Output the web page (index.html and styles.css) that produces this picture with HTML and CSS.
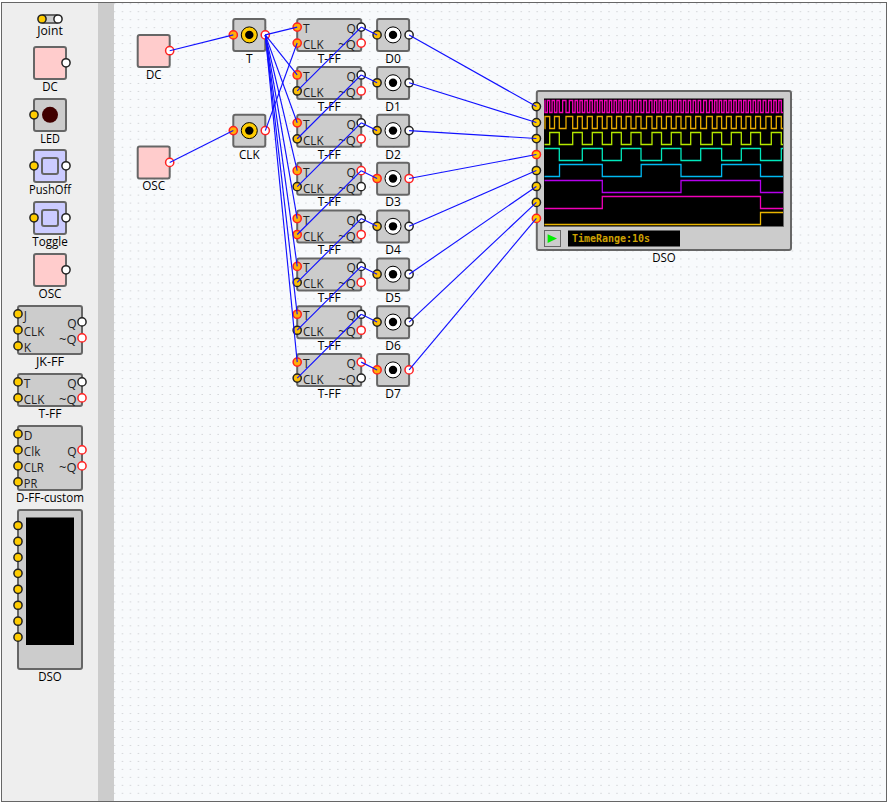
FILE: index.html
```html
<!DOCTYPE html>
<html lang="en">
<head>
<meta charset="utf-8">
<title>Circuit simulator</title>
<link rel="stylesheet" href="styles.css">
</head>
<body>
<main class="app">
  <aside class="palette" id="palette"></aside>
  <div class="divider"></div>
  <section class="stage">
    <svg class="board" id="board" viewBox="114 3 772 798" width="772" height="798"></svg>
  </section>
</main>
<script src="app.js"></script>
</body>
</html>
```
FILE: styles.css
```css
body {
  margin: 0;
  background: #fff;
  font-family: "Open Sans", "Noto Sans", sans-serif;
}

.app {
  display: flex;
  box-sizing: border-box;
  width: 886px;
  height: 800px;
  margin: 2px 0 0 1px;
  border: 1px solid #666;
  overflow: hidden;
}

.palette {
  display: flex;
  flex-direction: column;
  gap: 3.9px;
  box-sizing: border-box;
  width: 96px;
  padding-top: 11.8px;
  background: #eee;
}

.palette svg {
  display: block;
  flex: none;
  overflow: visible;
}

.divider {
  width: 16px;
  background: #ccc;
}

.stage {
  flex: 1;
  background: #f8fafc;
}

.board {
  display: block;
}

text {
  font-size: 12px;
  fill: #000;
}

.pin-name {
  fill: #222;
}

.body {
  fill: #ccc;
  stroke: #666;
  stroke-width: 2;
}

.body.source {
  fill: #fcc;
}

.body.button {
  fill: #ccf;
}

.pin {
  stroke: #222;
  stroke-width: 1.5;
}

.pin.in {
  fill: #fc0;
}

.pin.out {
  fill: #fff;
}

.pin.high {
  stroke: #f22;
}

.board .pin.in {
  fill: #fabe08;
}

.board .pin.in.high {
  fill: #ffae08;
}

.board .pin.in.probe {
  fill: #fc0;
}

.lamp {
  fill: #400000;
}

.jack {
  fill: #fc0;
  stroke: #000;
}

.jack.white {
  fill: #fff;
}

.hole {
  fill: #000;
}

.screen {
  fill: #000;
}

.bezel {
  fill: none;
  stroke: #666;
}

.play {
  fill: #0e0;
}

.lcd {
  font: bold 10px "DejaVu Sans Mono", monospace;
  fill: #cda000;
}

.trace {
  fill: none;
  stroke-width: 1.3;
}

.wire {
  stroke: #11f;
  stroke-width: 1.15;
}

.dot {
  fill: #d6d8db;
}
```
FILE: app.js
```js
const esc = (s) => String(s).replace(/&/g, "&amp;");
const rect = (x, y, w, h, cls, rx = 2) =>
  `<rect class="${cls}" x="${x}" y="${y}" width="${w}" height="${h}" rx="${rx}"/>`;
const pin = (x, y, kind, high) =>
  `<circle class="pin ${kind}${high ? " high" : ""}" cx="${x}" cy="${y}" r="4.1"/>`;

// Advance widths used to keep labels compact.
const WIDTHS = {
  Joint: 25.5, DC: 15.5, LED: 19.5, PushOff: 42, Toggle: 35.5, OSC: 23,
  "JK-FF": 28, "T-FF": 23, "D-FF-custom": 68, DSO: 23.5, CLK: 20.5,
  Clk: 16.5, CLR: 20, PR: 13.5, "~Q": 17.5
};
const text = (s, x, y, anchor, cls = "") => {
  const name = esc(s);
  const len = WIDTHS[s] ? ` textLength="${WIDTHS[s]}" lengthAdjust="spacingAndGlyphs"` : "";
  return `<text class="${cls}" x="${x}" y="${y}" text-anchor="${anchor}"${len}>${name}</text>`;
};

// A flip-flop body with named pins; each pin is [name, offset, high].
function chip(x, y, h, label, inputs, outputs) {
  let s = rect(x, y, 64, h, "body");
  for (const [n, dy] of inputs) s += text(n, x + 5.8, y + dy + 6, "start", "pin-name");
  for (const [n, dy] of outputs) s += text(n, x + 58.6, y + dy + 6, "end", "pin-name");
  for (const [, dy, hi] of inputs) s += pin(x, y + dy, "in", hi);
  for (const [, dy, hi] of outputs) s += pin(x + 64, y + dy, "out", hi);
  return s + text(label, x + 32, y + h + 11.7, "middle");
}

function box(x, y, label, kind, inner, hasIn, high) {
  let s = rect(x, y, 32, 32, "body " + kind) + inner;
  if (hasIn) s += pin(x, y + 15.8, "in", high);
  if (label !== "LED") s += pin(x + 32, y + 15.8, "out", high);
  return s + text(label, x + 16, y + 43.7, "middle");
}

const jack = (x, y, cls) =>
  `<circle class="jack ${cls}" cx="${x}" cy="${y}" r="8"/><circle class="hole" cx="${x}" cy="${y}" r="4.2"/>`;

const items = [];
const add = (h, body) => items.push(`<svg width="96" height="${h}">${body}</svg>`);
add(28, rect(40, 0, 16, 8, "body") + pin(40, 4, "in") + pin(56, 4, "out") + text("Joint", 48, 19.9, "middle"));
add(48, box(32, 0, "DC", "source", "", false));
add(48, box(32, 0, "LED", "", '<circle class="lamp" cx="48" cy="15.8" r="8"/>', true));
add(48, box(32, 0, "PushOff", "button", rect(40, 8, 16, 16, "body button"), true));
add(48, box(32, 0, "Toggle", "button", rect(40, 8, 16, 16, "body button"), true));
add(48, box(32, 0, "OSC", "source", "", false));
add(64, chip(16, 0, 48, "JK-FF", [["J", 7.9], ["CLK", 23.9], ["K", 39.9]], [["Q", 15.9], ["~Q", 31.9, 1]]));
add(48, chip(16, 0, 32, "T-FF", [["T", 7.9], ["CLK", 23.9]], [["Q", 7.9], ["~Q", 23.9, 1]]));
add(80, chip(16, 0, 64, "D-FF-custom",
  [["D", 7.9], ["Clk", 23.9], ["CLR", 39.9], ["PR", 55.9]], [["Q", 23.9, 1], ["~Q", 39.9, 1]]));
let scope = rect(16, 0, 64, 159, "body") + rect(24, 7.5, 48, 127.5, "screen", 0);
for (let i = 0; i < 8; i++) scope += pin(16, 15.5 + i * 15.95, "in");
add(176, scope + text("DSO", 48, 170.7, "middle"));
document.getElementById("palette").innerHTML = items.join("");

// Stage
const STEP = 7.976;
let out = "";
for (let r = 0; r < 100; r++) {
  for (let c = 0; c < 97; c++) {
    out += `<rect class="dot" x="${(113.7 + c * STEP).toFixed(2)}" y="${(3.2 + r * STEP).toFixed(2)}" width="1.6" height="1"/>`;
  }
}
const wires = [];
const wire = (x1, y1, x2, y2) => wires.push(`<line class="wire" x1="${x1}" y1="${y1}" x2="${x2}" y2="${y2}"/>`);

out += box(137.7, 34.9, "DC", "source", "", false, true);
out += box(137.7, 146.6, "OSC", "source", "", false, true);
out += box(233.3, 19.1, "T", "", jack(249.3, 34.9, ""), true, true);
out += box(233.3, 114.8, "CLK", "", jack(249.3, 130.6, ""), true, true);
wire(169.7, 50.7, 233.3, 34.9);
wire(169.7, 162.4, 233.3, 130.6);
wire(265.3, 130.6, 297.2, 43);

for (let i = 0; i < 8; i++) {
  const y = 19.1 + i * 47.86;
  const hi = i === 3 || i === 7;
  out += chip(297.2, y, 32, "T-FF",
    [["T", 8, true], ["CLK", 24, i === 0 || i === 4]],
    [["Q", 8, hi], ["~Q", 24, !hi]]);
  out += box(377.1, y, "D" + i, "", jack(393, y + 15.8, "white"), true, hi);
  wire(265.3, 34.9, 297.2, y + 8);
  wire(361.2, y + 8, 377.1, y + 15.8);
  if (i < 7) wire(361.2, y + 8, 297.2, y + 71.8);
  wire(409.1, y + 15.8, 536.4, 106.6 + i * 15.97);
}

// Oscilloscope
out += rect(536.8, 91, 254.2, 159, "body") + rect(544, 98.5, 239.5, 128, "screen", 0);
out += '<path class="bezel" d="M544 226.5H783.5V98.5"/>';

// Each faster lane falls on every edge of the lane below and rises halfway between.
const edges2 = [549.7, 559.3, 572.7, 582.3, 592.3, 602.3, 611.7, 621.3, 631, 641, 652, 661.5,
  671.3, 681, 690.7, 700.7, 712.3, 721.6, 731.3, 741.3, 750.7, 760.5, 771.3, 781.3];
const refine = (edges) => {
  const res = [];
  edges.forEach((e, i) => {
    res.push(e);
    if (i < edges.length - 1) res.push((e + edges[i + 1]) / 2);
  });
  return res;
};
const edges1 = [545, ...refine(edges2)];
const edges0 = refine(edges1);
const lanes = [
  ["#f000b8", true, edges0],
  ["#e8ac00", false, edges1],
  ["#b4e800", false, edges2],
  ["#00e8bc", true, edges2.filter((_, i) => i % 2)],
  ["#00b8f0", false, [559.5, 602.3, 641.2, 681, 721.6, 760.5]],
  ["#b400ec", true, [602.3, 681, 760.5]],
  ["#f000b8", false, [602.3, 760.5]],
  ["#e8b400", false, [760.5]]
];
lanes.forEach(([color, start, edges], i) => {
  const level = (h) => (h ? 100.5 : 112.5) + i * 16;
  let high = start;
  let d = `M544.5 ${level(high)}`;
  for (const x of edges) {
    d += `H${x}`;
    high = !high;
    d += `V${level(high)}`;
  }
  out += `<path class="trace" stroke="${color}" d="${d}H783"/>`;
});
for (let i = 0; i < 8; i++) out += pin(536.4, 106.6 + i * 15.97, "in probe", i === 3 || i === 7);
out += rect(544.5, 230.5, 16, 16, "bezel", 0);
out += '<path class="play" d="M547.6 234.3L557 238.5L547.6 243Z"/>';
out += rect(568, 230.5, 112, 16, "screen", 0);
out += '<text class="lcd" x="572" y="241.6" textLength="78">TimeRange:10s</text>';
out += text("DSO", 664, 261.8, "middle");

document.getElementById("board").innerHTML = out + wires.join("");
```
